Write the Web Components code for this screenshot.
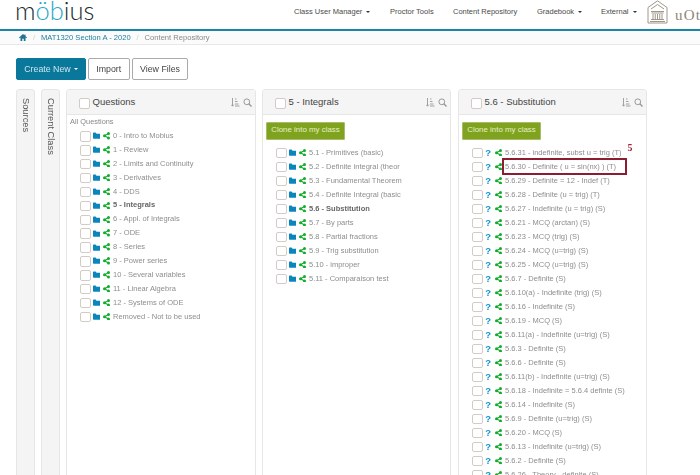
<!DOCTYPE html>
<html lang="en"><head><meta charset="utf-8"><title>Content Repository</title>
<style>
html,body{margin:0;padding:0;height:475px;overflow:hidden;background:#fff;font-family:"Liberation Sans",Arial,sans-serif;color:#555}
#root{height:475px;overflow:hidden;filter:blur(.4px);display:flex;flex-direction:column}
</style></head><body>
<div id="root">
<m-nav></m-nav>
<m-crumbs></m-crumbs>
<m-toolbar>
  <m-btn primary caret style="width:70px">Create New</m-btn><m-btn style="margin-left:2px;width:41.5px">Import</m-btn><m-btn style="margin-left:2.5px;width:56px">View Files</m-btn>
</m-toolbar>
<m-board>
  <m-tab style="margin-right:6px">Sources</m-tab>
  <m-tab style="margin-right:6px">Current Class</m-tab>
  <m-panel heading="Questions" caption="All Questions" style="width:190px;margin-right:6px;--row:13.9px">
    <m-row>0 - Intro to Mobius</m-row><m-row>1 - Review</m-row><m-row>2 - Limits and Continuity</m-row><m-row>3 - Derivatives</m-row><m-row>4 - DDS</m-row><m-row strong>5 - Integrals</m-row><m-row>6 - Appl. of Integrals</m-row><m-row>7 - ODE</m-row><m-row>8 - Series</m-row><m-row>9 - Power series</m-row><m-row>10 - Several variables</m-row><m-row>11 - Linear Algebra</m-row><m-row>12 - Systems of ODE</m-row><m-row>Removed - Not to be used</m-row>
  </m-panel>
  <m-panel heading="5 - Integrals" clone style="width:189px;margin-right:7px">
    <m-row>5.1 - Primitives (basic)</m-row><m-row>5.2 - Definite integral (theor</m-row><m-row>5.3 - Fundamental Theorem</m-row><m-row>5.4 - Definite Integral (basic</m-row><m-row strong>5.6 - Substitution</m-row><m-row>5.7 - By parts</m-row><m-row>5.8 - Partial fractions</m-row><m-row>5.9 - Trig substitution</m-row><m-row>5.10 - improper</m-row><m-row>5.11 - Comparaison test</m-row>
  </m-panel>
  <m-panel heading="5.6 - Substitution" clone style="width:189px">
    <m-row q mark="5">5.6.31 - indefinite, subst u = trig (T)</m-row>
    <m-row q boxed>5.6.30 - Definite ( u = sin(nx) ) (T)</m-row>
    <m-row q>5.6.29 - Definite = 12 - Indef (T)</m-row><m-row q>5.6.28 - Definite (u = trig) (T)</m-row><m-row q>5.6.27 - Indefinite (u = trig) (S)</m-row><m-row q>5.6.21 - MCQ (arctan) (S)</m-row><m-row q>5.6.23 - MCQ (trig) (S)</m-row><m-row q>5.6.24 - MCQ (u=trig) (S)</m-row><m-row q>5.6.25 - MCQ (u=trig) (S)</m-row><m-row q>5.6.7 - Definite (S)</m-row><m-row q>5.6.10(a) - Indefinite (trig) (S)</m-row><m-row q>5.6.16 - Indefinite (S)</m-row><m-row q>5.6.19 - MCQ (S)</m-row><m-row q>5.6.11(a) - Indefinite (u=trig) (S)</m-row><m-row q>5.6.3 - Definite (S)</m-row><m-row q>5.6.6 - Definite (S)</m-row><m-row q>5.6.11(b) - Indefinite (u=trig) (S)</m-row><m-row q>5.6.18 - Indefinite = 5.6.4 definte (S)</m-row><m-row q>5.6.14 - Indefinite (S)</m-row><m-row q>5.6.9 - Definite (u=trig) (S)</m-row><m-row q>5.6.20 - MCQ (S)</m-row><m-row q>5.6.13 - Indefinite (u=trig) (S)</m-row><m-row q>5.6.2 - Definite (S)</m-row><m-row q>5.6.26 - Theory - definite (S)</m-row>
  </m-panel>
</m-board>
</div>
<script>
const CHECK=`display:block;box-sizing:border-box;width:10.5px;height:10.5px;border:1px solid #d2ccc5;border-radius:2px;background:#fff;flex:none`;
function def(name,html,init){customElements.define(name,class extends HTMLElement{
  constructor(){super();this.attachShadow({mode:'open'}).innerHTML=html}
  connectedCallback(){if(init)init.call(this,this.shadowRoot)}
})}
def('m-nav',`<style>
:host{display:flex;align-items:flex-start;height:29px;border-bottom:2px solid #1c84a6;overflow:hidden;flex:none;background:#fff}
.logo{flex:none;margin:0 0 0 15px;font:300 25.500px/20px Lato,"Liberation Sans",sans-serif;color:#222c30;width:279px;white-space:nowrap}
.logo span{color:#2aa6c9}
nav{display:flex;flex:none;font-size:7.500px;color:#4a4a4a;line-height:23px}
a{white-space:nowrap;display:block}
a.c::after{content:"";display:inline-block;margin-left:4px;vertical-align:1px;border:2px solid transparent;border-top-color:#333;border-bottom:0}
.brand{flex:none;display:flex;align-items:flex-start;color:#8f8576;gap:7px}
.brand span{font:15px/30px "Liberation Serif",serif;letter-spacing:1.200px}
</style>
<div class="logo">m<span>öb</span>ius</div>
<nav><a class="c" style="width:96px">Class User Manager</a><a style="width:63px">Proctor Tools</a><a style="width:84px">Content Repository</a><a class="c" style="width:64px">Gradebook</a><a class="c" style="width:46px">External</a></nav>
<div class="brand"><svg width="21" height="24" viewBox="0 0 21 24" fill="none" stroke="#a0968a" stroke-width="1"><path d="M1 7.500 10.500.8 20 7.500M1 7.500V23H20V7.500M4 9 10.500 4.500 17 9"/><path d="M4 11.500h13M4.500 13h12M6 14v5M8.250 14v5M10.500 14v5M12.750 14v5M15 14v5M4 19.500h13M3 21.500h15"/></svg><span>uOt</span></div>`);
def('m-crumbs',`<style>
:host{display:flex;align-items:center;height:13px;background:#fbfbfb;border-bottom:1px solid #e8e8e8;font-size:7.600px;color:#888;padding-left:19px;flex:none}
svg{display:block;flex:none}
b{font-weight:400;color:#ccc;margin:0 5.900px}
a{color:#1f7f9f}
</style>
<svg width="8" height="7" viewBox="0 0 16 14"><path fill="#1f7393" d="M8 0 0 7l1 1.500L3 7v7h3.500V9.500h3V14H13V7l2 1.500L16 7l-3-2.600V1h-2v1.700z"/></svg><b>/</b><a>MAT1320 Section A - 2020</a><b>/</b><span>Content Repository</span>`);
def('m-toolbar',`<style>:host{display:flex;padding:13px 0 0 16px;height:22px;flex:none}</style><slot></slot>`);
def('m-btn',`<style>
:host{display:flex;align-items:center;justify-content:center;box-sizing:border-box;height:22px;border:1px solid #aaa;border-radius:2px;background:#fff;font-size:8.800px;color:#444;white-space:nowrap;flex:none}
:host([primary]){background:#09789a;border-color:#09789a;color:#cfe6ee}
i{display:none;margin-left:3px;border:2px solid transparent;border-top-color:#fff;border-bottom:0}
:host([caret]) i{display:block}
</style><slot></slot><i></i>`);
def('m-board',`<style>:host{display:flex;align-items:stretch;flex:1;min-height:0;padding:9px 0 0 16px;margin-bottom:-10px}</style><slot></slot>`);
def('m-tab',`<style>
:host{display:block;box-sizing:border-box;width:19px;background:#f4f4f4;border:1px solid #e6e6e6;border-radius:3px 3px 0 0;writing-mode:vertical-rl;font-size:9.300px;color:#555;line-height:17px;padding-top:8px}
</style><slot></slot>`);
def('m-panel',`<style>
:host{display:flex;flex-direction:column;box-sizing:border-box;border:1px solid #e6e6e6;border-radius:3px 3px 0 0;background:#fff;overflow:hidden}
header{display:flex;align-items:center;height:25px;box-sizing:border-box;background:#f5f5f5;border-bottom:1px solid #e6e6e6;padding:0 3px 0 12px;flex:none}
.cb{${CHECK};margin-top:3px}
h2{margin:-2px 0 0 3px;font:400 9.500px "Liberation Sans",sans-serif;color:#444;flex:1}
.cap{font-size:7.400px;color:#888;padding:2px 0 0 3px;height:14px;box-sizing:border-box;display:none}
.clone{display:none;align-self:flex-start;margin:7px 0 5.500px 3px;background:#7fa31e;border:1px solid #a9bc6e;border-radius:1px;width:79px;height:18px;box-sizing:border-box;text-align:center;font-size:7.900px;line-height:14.500px;color:#e6efc6;white-space:nowrap}
:host([caption]) .cap{display:block}
:host([clone]) .clone{display:block}
.list{display:flex;flex-direction:column;padding-left:13px}
svg{display:block;flex:none}
</style>
<header><span class="cb"></span><h2></h2>
<svg width="9" height="9" viewBox="0 0 9 9" fill="none" stroke="#999" stroke-width=".9"><path d="M1.500 0v8M.2 6.700 1.500 8.200 2.800 6.700M4 1h1.500M4 3.500h2.500M4 6h3.500M4 8h4.500"/></svg>
<svg style="margin-left:3px" width="9" height="9" viewBox="0 0 9 9" fill="none" stroke="#999" stroke-width="1"><circle cx="3.800" cy="3.800" r="2.900"/><path d="M5.800 5.800 8.500 8.500" stroke-width="1.400"/></svg></header>
<div class="cap"></div><div class="clone">Clone into my class</div>
<div class="list"><slot></slot></div>`,function(s){s.querySelector('h2').textContent=this.getAttribute('heading');s.querySelector('.cap').textContent=this.getAttribute('caption')||''});
def('m-row',`<style>
:host{display:flex;align-items:center;height:var(--row,14px);font-size:7.500px;color:#8e8e8e;white-space:nowrap;position:relative}
:host([strong]){font-weight:700;color:#666}
.cb{${CHECK};margin-top:1px}
.f{margin-left:2px;width:7.500px;height:7px;display:block;flex:none}
.q{display:none;margin-left:2px;width:7.500px;font:700 9.500px/10px "Liberation Sans",sans-serif;color:#0f93d0;text-align:center;flex:none}
.s{margin-left:3.300px;display:block;flex:none}
:host([q]) .f{display:none}
:host([q]) .q{display:block}
.t{margin-left:2.700px;margin-top:-1px}
.box{display:none;position:absolute;left:30px;top:-1.500px;width:124.500px;height:17px;box-sizing:border-box;border:2px solid #8c1c30;pointer-events:none}
:host([boxed]) .box{display:block}
.m{display:none;position:absolute;left:155.500px;top:-3px;font:700 10px/10px "Liberation Serif",serif;color:#a3263a}
:host([mark]) .m{display:block}
</style>
<span class="cb"></span>
<svg class="f" viewBox="0 0 16 14"><path fill="#0a86bd" d="M0 2a1.500 1.500 0 0 1 1.500-1.500h4L7.500 3h7A1.500 1.500 0 0 1 16 4.500v8a1.500 1.500 0 0 1-1.500 1.500h-13A1.500 1.500 0 0 1 0 12.500z"/></svg>
<span class="q">?</span>
<svg class="s" width="7" height="7.500" viewBox="0 0 14 15"><g fill="#14ad2c"><circle cx="11" cy="3" r="3"/><circle cx="3" cy="7.500" r="3"/><circle cx="11" cy="12" r="3"/></g><path stroke="#14ad2c" stroke-width="2.200" fill="none" d="M11 3 3 7.500l8 4.500"/></svg>
<span class="t"><slot></slot></span><span class="box"></span><span class="m"></span>`,function(s){s.querySelector('.m').textContent=this.getAttribute('mark')||''});
</script>
</body></html>
